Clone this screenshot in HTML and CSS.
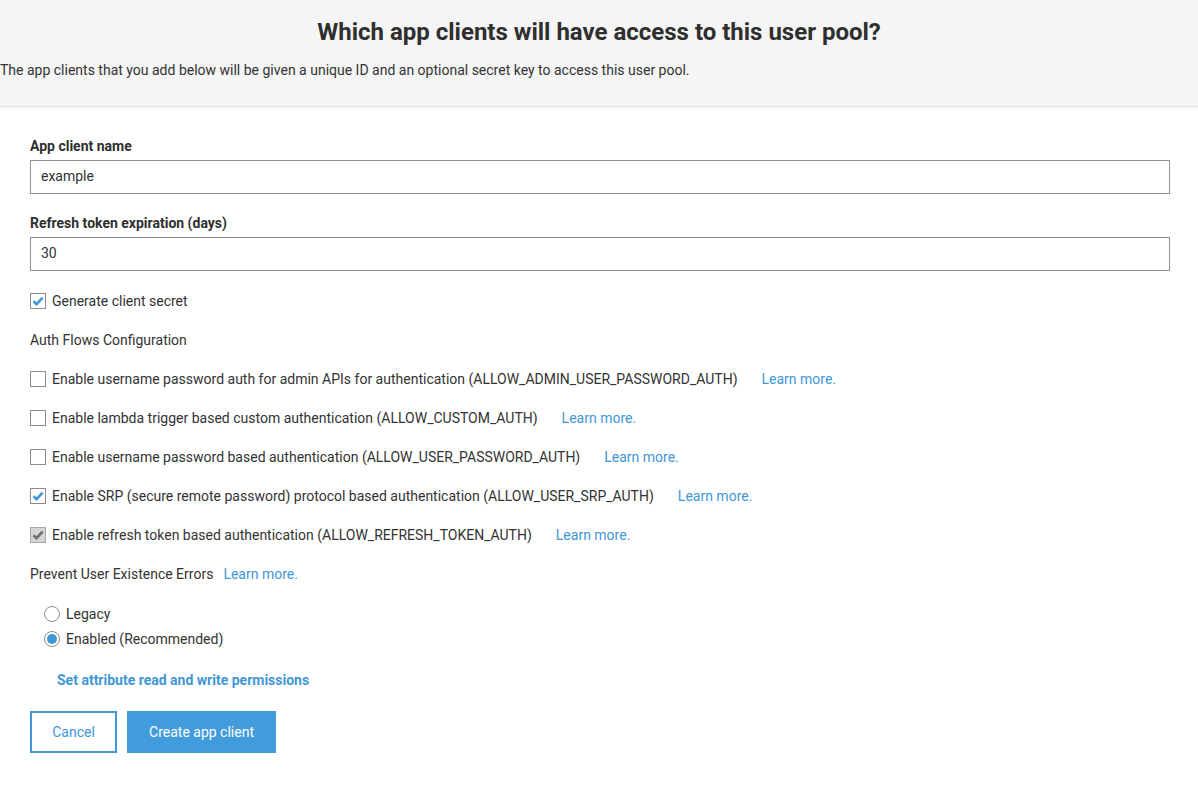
FILE: index.html
```html
<!DOCTYPE html>
<html>
<head>
<meta charset="utf-8">
<link rel="stylesheet" href="styles.css">
</head>
<body>
<header class="head">
  <h1 class="title">Which app clients will have access to this user pool?</h1>
  <p class="sub">The app clients that you add below will be given a unique ID and an optional secret key to access this user pool.</p>
</header>
<main class="form">
  <div class="field">
    <label class="label">App client name</label>
    <div class="input">example</div>
  </div>
  <div class="field">
    <label class="label">Refresh token expiration (days)</label>
    <div class="input">30</div>
  </div>
  <div class="row"><span class="cb checked"><svg viewBox="0 0 16 16" width="16" height="16"><path d="M3.5 8.3 L6.6 11.2 L12.6 4.6" fill="none" stroke="#3f97d8" stroke-width="2.6"/></svg></span><span>Generate client secret</span></div>
  <div class="row plain">Auth Flows Configuration</div>
  <div class="row"><span class="cb"></span><span>Enable username password auth for admin APIs for authentication (ALLOW_ADMIN_USER_PASSWORD_AUTH)</span><a class="learn">Learn more.</a></div>
  <div class="row"><span class="cb"></span><span>Enable lambda trigger based custom authentication (ALLOW_CUSTOM_AUTH)</span><a class="learn">Learn more.</a></div>
  <div class="row"><span class="cb"></span><span>Enable username password based authentication (ALLOW_USER_PASSWORD_AUTH)</span><a class="learn">Learn more.</a></div>
  <div class="row"><span class="cb checked"><svg viewBox="0 0 16 16" width="16" height="16"><path d="M3.5 8.3 L6.6 11.2 L12.6 4.6" fill="none" stroke="#3f97d8" stroke-width="2.6"/></svg></span><span>Enable SRP (secure remote password) protocol based authentication (ALLOW_USER_SRP_AUTH)</span><a class="learn">Learn more.</a></div>
  <div class="row"><span class="cb disabled"><svg viewBox="0 0 16 16" width="16" height="16"><path d="M3.5 8.3 L6.6 11.2 L12.6 4.6" fill="none" stroke="#6e6e6e" stroke-width="2.6"/></svg></span><span>Enable refresh token based authentication (ALLOW_REFRESH_TOKEN_AUTH)</span><a class="learn">Learn more.</a></div>
  <div class="row plain">Prevent User Existence Errors<a class="learn small">Learn more.</a></div>
  <div class="radios">
    <div class="radio"><span class="rb"></span><span>Legacy</span></div>
    <div class="radio"><span class="rb on"></span><span>Enabled (Recommended)</span></div>
  </div>
  <a class="attr">Set attribute read and write permissions</a>
  <div class="buttons">
    <button class="btn cancel">Cancel</button>
    <button class="btn primary">Create app client</button>
  </div>
</main>
</body>
</html>
```
FILE: styles.css
```css
* { box-sizing: border-box; }
html, body { margin: 0; padding: 0; }
body {
  font-family: Roboto, "Liberation Sans", sans-serif;
  font-size: 14px;
  color: #333;
  background: #fff;
  width: 1198px;
}
.head {
  background: #f4f5f4;
  height: 107px;
  border-bottom: 1px solid #e3e4e3;
  box-shadow: 0 1px 2px rgba(0,0,0,0.05);
  padding-top: 17px;
}
.title {
  margin: 0;
  text-align: center;
  font-size: 24px;
  font-weight: 700;
  line-height: 30px;
  color: #2f2f2f;
}
.sub {
  margin: 13px 0 0 0;
  font-size: 14px;
  line-height: 20px;
  color: #333;
}
.form {
  padding: 29px 28px 0 30px;
}
.field { margin-bottom: 19px; }
.field + .field { margin-bottom: 20px; }
.label {
  display: block;
  font-weight: 700;
  font-size: 14px;
  line-height: 20px;
  color: #2f2f2f;
  margin-bottom: 4px;
}
.input {
  height: 34px;
  border: 1px solid #8f9290;
  padding: 0 10px;
  line-height: 31px;
  font-size: 14px;
  color: #333;
  width: 1140px;
}
.row {
  display: flex;
  align-items: center;
  height: 20px;
  margin-bottom: 19px;
  line-height: 20px;
}
.row.plain { display: block; }
.cb {
  width: 16px;
  height: 16px;
  border: 1px solid #8c8c8c;
  background: #fff;
  margin-right: 6px;
  flex: none;
  position: relative;
}
.cb svg { position: absolute; left: -1px; top: -1px; }
.cb.disabled { background: #d5d5d5; border-color: #a8a8a8; }
.learn {
  color: #3f97d8;
  margin-left: 24px;
}
.learn.small { margin-left: 10px; }
.radios {
  padding-left: 14px;
  margin-top: 20px;
}
.radio {
  display: flex;
  align-items: center;
  height: 20px;
  margin-bottom: 5px;
}
.rb {
  width: 16px;
  height: 16px;
  border: 1px solid #8c8c8c;
  border-radius: 50%;
  margin-right: 6px;
  position: relative;
  flex: none;
}
.rb.on::after {
  content: "";
  position: absolute;
  left: 2px; top: 2px;
  width: 10px; height: 10px;
  border-radius: 50%;
  background: #3f97d8;
}
.attr {
  display: block;
  margin: 21px 0 0 27px;
  font-weight: 700;
  color: #3f97d8;
  line-height: 20px;
}
.buttons {
  display: flex;
  gap: 10px;
  margin-top: 21px;
}
.btn {
  font-family: Roboto, "Liberation Sans", sans-serif;
  font-size: 14px;
  height: 42px;
  padding: 0 20px;
  cursor: pointer;
}
.cancel {
  width: 87px;
  border: 2px solid #3f97d8;
  background: #fff;
  color: #3f97d8;
}
.primary {
  width: 149px;
  border: none;
  background: #429bdb;
  color: #fff;
}
```
